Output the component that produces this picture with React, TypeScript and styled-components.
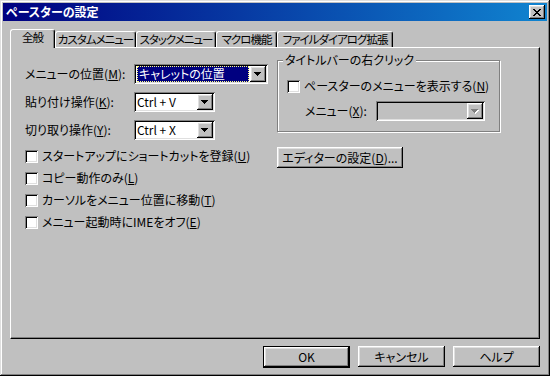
import React from "react";
import styled, { createGlobalStyle } from "styled-components";

const GlobalStyle = createGlobalStyle`
  html, body {
    margin: 0;
    padding: 0;
    background: #c0c0c0;
  }
  body {
    font-family: "Noto Sans CJK JP", "MS UI Gothic", sans-serif;
    font-size: 12px;
    color: #000;
  }
`;

const raised = `
  box-shadow: inset -1px -1px #000, inset 1px 1px #fff,
    inset -2px -2px #808080, inset 2px 2px #dfdfdf;
`;

const sunken = `
  box-shadow: inset 1px 1px #808080, inset -1px -1px #fff,
    inset 2px 2px #000, inset -2px -2px #dfdfdf;
`;

const Window = styled.div`
  width: 550px;
  height: 376px;
  box-sizing: border-box;
  padding: 3px;
  background: #c0c0c0;
  box-shadow: inset -1px -1px #000, inset 1px 1px #dfdfdf,
    inset -2px -2px #808080, inset 2px 2px #fff;
  display: flex;
  flex-direction: column;
  font-feature-settings: "palt";
  line-height: 1;
`;

const TitleBar = styled.div`
  height: 18px;
  flex-shrink: 0;
  display: flex;
  align-items: center;
  justify-content: space-between;
  padding: 0 2px 0 3px;
  background: linear-gradient(to right, #000080, #1084d0);
`;

const Title = styled.span`
  color: #fff;
  font-weight: bold;
  font-size: 12px;
`;

const CloseButton = styled.div`
  width: 16px;
  height: 14px;
  background: #c0c0c0;
  display: flex;
  align-items: center;
  justify-content: center;
  ${raised}
`;

const Body = styled.div`
  flex: 1;
  display: flex;
  flex-direction: column;
  padding: 8px 7px 0 7px;
  min-height: 0;
`;

const TabStrip = styled.div`
  height: 18px;
  flex-shrink: 0;
  display: flex;
  align-items: flex-end;
  position: relative;
  z-index: 1;
`;

const Tab = styled.div<{ $active?: boolean; $w: number }>`
  width: ${(p) => p.$w}px;
  height: ${(p) => (p.$active ? 19 : 16)}px;
  margin-bottom: ${(p) => (p.$active ? -1 : 0)}px;
  box-sizing: border-box;
  background: #c0c0c0;
  border-top: 1px solid #fff;
  border-left: 1px solid #fff;
  border-right: 1px solid #000;
  border-radius: 3px 3px 0 0;
  box-shadow: inset -1px 0 #808080;
  display: flex;
  align-items: center;
  justify-content: center;
  padding-bottom: ${(p) => (p.$active ? 2 : 0)}px;
  font-size: 11.5px;
  letter-spacing: -1px;
  white-space: nowrap;
`;

const Panel = styled.div`
  flex: 1;
  box-sizing: border-box;
  border-top: 1px solid #fff;
  border-left: 1px solid #fff;
  border-right: 1px solid #000;
  border-bottom: 1px solid #000;
  box-shadow: inset -1px -1px #808080;
  display: flex;
  padding: 10px 0 0 14px;
`;

const LeftColumn = styled.div`
  width: 252px;
  display: flex;
  flex-direction: column;
  padding-top: 6px;
`;

const FieldRow = styled.div`
  height: 20px;
  display: flex;
  align-items: center;
  margin-bottom: 8px;
  white-space: nowrap;
`;

const FieldLabel = styled.span<{ $w: number }>`
  width: ${(p) => p.$w}px;
  flex-shrink: 0;
`;

const Combo = styled.div<{ $w: number; $disabled?: boolean }>`
  width: ${(p) => p.$w}px;
  height: 20px;
  box-sizing: border-box;
  padding: 2px;
  display: flex;
  align-items: stretch;
  background: ${(p) => (p.$disabled ? "#c0c0c0" : "#fff")};
  ${sunken}
`;

const ComboText = styled.div`
  flex: 1;
  display: flex;
  align-items: center;
  padding-left: 1px;
  white-space: nowrap;
  overflow: hidden;
`;

const Selection = styled.div`
  flex: 1;
  height: 100%;
  box-sizing: border-box;
  margin: 0 1px 0 1px;
  padding-left: 1px;
  display: flex;
  align-items: center;
  background: #000080;
  color: #fff;
  border: 1px dotted #ffff80;
`;

const ComboButton = styled.div`
  width: 16px;
  height: 16px;
  flex-shrink: 0;
  background: #c0c0c0;
  display: flex;
  align-items: center;
  justify-content: center;
  ${raised}
`;

const CheckList = styled.div`
  display: flex;
  flex-direction: column;
  margin-top: -3px;
`;

const CheckRow = styled.div`
  height: 22px;
  display: flex;
  align-items: center;
  white-space: nowrap;
`;

const Box = styled.div`
  width: 13px;
  height: 13px;
  flex-shrink: 0;
  background: #fff;
  margin-right: 4px;
  ${sunken}
`;

const RightColumn = styled.div`
  width: 223px;
  display: flex;
  flex-direction: column;
  margin-top: -5px;
`;

const Group = styled.fieldset`
  margin: 0;
  padding: 0 0 10px 9px;
  border: 1px solid #808080;
  box-shadow: 1px 1px 0 #fff, inset 1px 1px 0 #fff;
  display: flex;
  flex-direction: column;
`;

const Legend = styled.legend`
  padding: 0 2px;
  margin-left: -4px;
  background: #c0c0c0;
  line-height: 14px;
  white-space: nowrap;
`;

const GroupCheckRow = styled(CheckRow)`
  margin-top: 8px;
`;

const GroupFieldRow = styled(FieldRow)`
  margin: 4px 0 0 18px;
`;

const PushButton = styled.div<{ $w: number; $default?: boolean }>`
  width: ${(p) => p.$w}px;
  height: ${(p) => (p.$default ? 22 : 21)}px;
  box-sizing: border-box;
  background: #c0c0c0;
  display: flex;
  align-items: center;
  justify-content: center;
  white-space: nowrap;
  ${(p) =>
    p.$default
      ? `box-shadow: inset 0 0 0 1px #000, inset -2px -2px #000, inset 2px 2px #fff,
           inset -3px -3px #808080, inset 3px 3px #dfdfdf;`
      : raised}
`;

const EditorButton = styled(PushButton)`
  margin-top: 15px;
  height: 21px;
`;

const ButtonRow = styled.div`
  height: 34px;
  flex-shrink: 0;
  display: flex;
  justify-content: flex-end;
  align-items: flex-start;
  gap: 8px;
  padding-top: 7px;
  box-sizing: border-box;
`;

const U = styled.span`
  text-decoration: underline;
`;

const Arrow = ({ disabled }: { disabled?: boolean }) => (
  <svg width="8" height="5" viewBox="0 0 8 5" shapeRendering="crispEdges">
    {disabled && (
      <path d="M1 1h7v1H1z M2 2h5v1H2z M3 3h3v1H3z M4 4h1v1H4z" fill="#fff" />
    )}
    <path
      d="M0 0h7v1H0z M1 1h5v1H1z M2 2h3v1H2z M3 3h1v1H3z"
      fill={disabled ? "#808080" : "#000"}
    />
  </svg>
);

const CloseGlyph = () => (
  <svg width="8" height="7" viewBox="0 0 8 7" shapeRendering="crispEdges">
    <path
      d="M0 0h2v1H0z M6 0h2v1H6z M1 1h2v1H1z M5 1h2v1H5z M2 2h4v1H2z M3 3h2v1H3z M2 4h4v1H2z M1 5h2v1H1z M5 5h2v1H5z M0 6h2v1H0z M6 6h2v1H6z"
      fill="#000"
    />
  </svg>
);

const tabs = [
  { label: "全般", w: 45, active: true },
  { label: "カスタムメニュー", w: 81 },
  { label: "スタックメニュー", w: 80 },
  { label: "マクロ機能", w: 61 },
  { label: "ファイルダイアログ拡張", w: 116 },
];

const checks: [string, string, string][] = [
  ["スタートアップにショートカットを登録(", "U", ")"],
  ["コピー動作のみ(", "L", ")"],
  ["カーソルをメニュー位置に移動(", "T", ")"],
  ["メニュー起動時にIMEをオフ(", "E", ")"],
];

export default function App() {
  return (
    <>
      <GlobalStyle />
      <Window>
        <TitleBar>
          <Title>ペースターの設定</Title>
          <CloseButton>
            <CloseGlyph />
          </CloseButton>
        </TitleBar>
        <Body>
          <TabStrip>
            {tabs.map((t) => (
              <Tab key={t.label} $w={t.w} $active={t.active}>
                {t.label}
              </Tab>
            ))}
          </TabStrip>
          <Panel>
            <LeftColumn>
              <FieldRow>
                <FieldLabel $w={109}>
                  メニューの位置(<U>M</U>):
                </FieldLabel>
                <Combo $w={134}>
                  <Selection>キャレットの位置</Selection>
                  <ComboButton>
                    <Arrow />
                  </ComboButton>
                </Combo>
              </FieldRow>
              <FieldRow>
                <FieldLabel $w={109}>
                  貼り付け操作(<U>K</U>):
                </FieldLabel>
                <Combo $w={81}>
                  <ComboText>Ctrl + V</ComboText>
                  <ComboButton>
                    <Arrow />
                  </ComboButton>
                </Combo>
              </FieldRow>
              <FieldRow>
                <FieldLabel $w={109}>
                  切り取り操作(<U>Y</U>):
                </FieldLabel>
                <Combo $w={81}>
                  <ComboText>Ctrl + X</ComboText>
                  <ComboButton>
                    <Arrow />
                  </ComboButton>
                </Combo>
              </FieldRow>
              <CheckList>
                {checks.map(([a, k, b]) => (
                  <CheckRow key={a}>
                    <Box />
                    <span>
                      {a}
                      <U>{k}</U>
                      {b}
                    </span>
                  </CheckRow>
                ))}
              </CheckList>
            </LeftColumn>
            <RightColumn>
              <Group>
                <Legend>タイトルバーの右クリック</Legend>
                <GroupCheckRow>
                  <Box />
                  <span>
                    ペースターのメニューを表示する(<U>N</U>)
                  </span>
                </GroupCheckRow>
                <GroupFieldRow>
                  <FieldLabel $w={71}>
                    メニュー(<U>X</U>):
                  </FieldLabel>
                  <Combo $w={109} $disabled>
                    <ComboText />
                    <ComboButton>
                      <Arrow disabled />
                    </ComboButton>
                  </Combo>
                </GroupFieldRow>
              </Group>
              <EditorButton $w={126}>
                エディターの設定(<U>D</U>)...
              </EditorButton>
            </RightColumn>
          </Panel>
          <ButtonRow>
            <PushButton $w={87} $default>
              OK
            </PushButton>
            <PushButton $w={87}>キャンセル</PushButton>
            <PushButton $w={87}>ヘルプ</PushButton>
          </ButtonRow>
        </Body>
      </Window>
    </>
  );
}
